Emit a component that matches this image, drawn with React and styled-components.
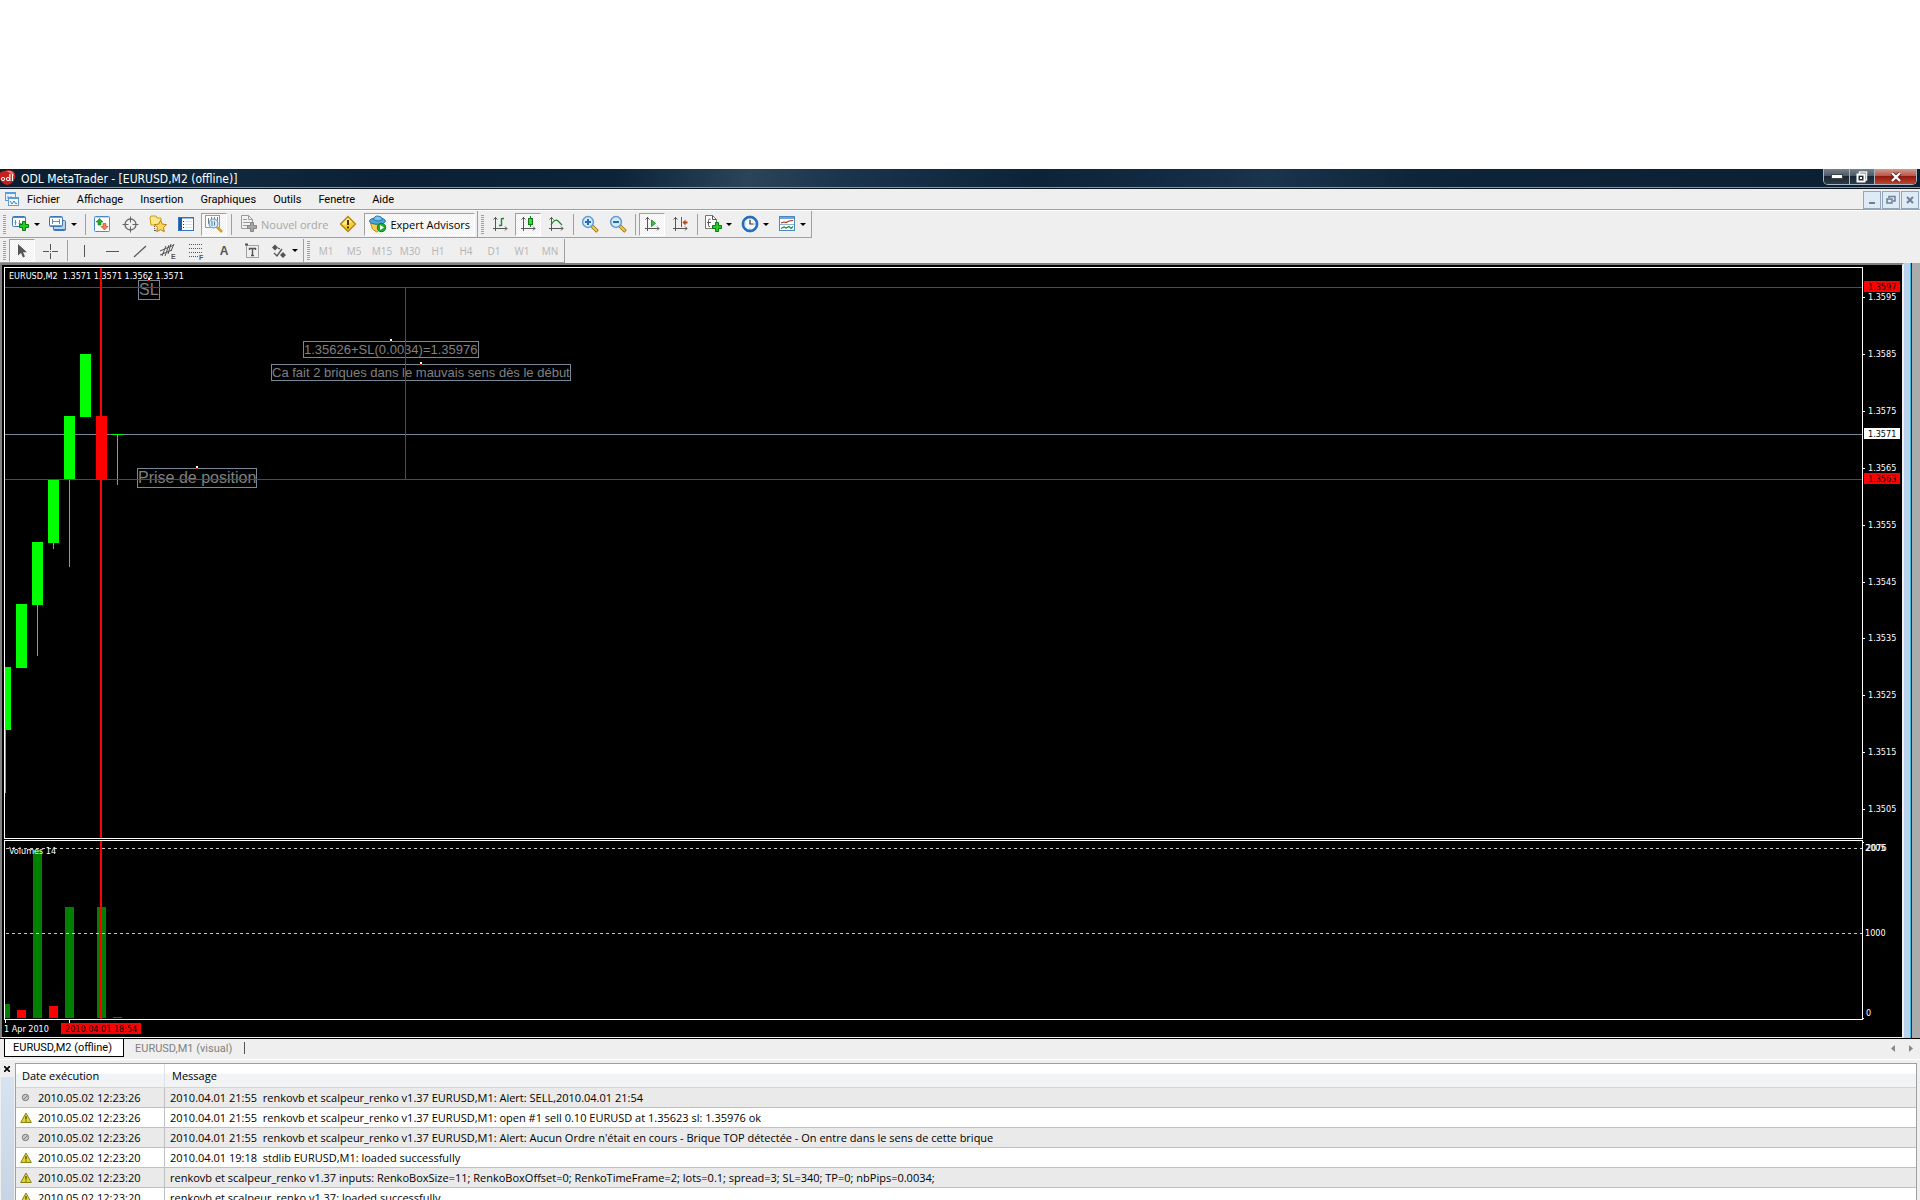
import React, { Fragment } from "react";
import styled, { createGlobalStyle, css } from "styled-components";

const periods = ["M1", "M5", "M15", "M30", "H1", "H4", "D1", "W1", "MN"];

const menus = [
  "Fichier",
  "Affichage",
  "Insertion",
  "Graphiques",
  "Outils",
  "Fenetre",
  "Aide",
];

// body: x, top, bottom. wick: lowest point under the body
const candles = [
  { x: -5, top: 399, bottom: 462, low: 525 },
  { x: 11, top: 336, bottom: 400 },
  { x: 27, top: 274, bottom: 337, low: 388 },
  { x: 43, top: 211, bottom: 275, low: 281 },
  { x: 59, top: 148, bottom: 211, low: 299 },
  { x: 75, top: 86, bottom: 149 },
  { x: 91, top: 148, bottom: 211, down: true },
  { x: 107, top: 166, bottom: 167, low: 217 },
];

const volumes = [
  { x: -4, height: 14 },
  { x: 12, height: 8, down: true },
  { x: 28, height: 168 },
  { x: 44, height: 12, down: true },
  { x: 60, height: 111 },
  { x: 92, height: 111 },
  { x: 108, height: 1, down: true },
];

const scale = [
  "1.3595",
  "1.3585",
  "1.3575",
  "1.3565",
  "1.3555",
  "1.3545",
  "1.3535",
  "1.3525",
  "1.3515",
  "1.3505",
];

const tags = [
  { price: "1.3597", y: 14, fill: "#f00" },
  { price: "1.3571", y: 161, fill: "#fff" },
  { price: "1.3563", y: 206, fill: "#f00" },
];

const notes = [
  { text: "SL", x: 133, y: 12, size: 16 },
  { text: "1.35626+SL(0.0034)=1.35976", x: 298, y: 73, size: 13 },
  {
    text: "Ca fait 2 briques dans le mauvais sens dès le début",
    x: 266,
    y: 96,
    size: 13,
  },
  { text: "Prise de position", x: 132, y: 200, size: 16 },
];

const logs = [
  {
    date: "2010.05.02 12:23:26",
    message:
      "2010.04.01 21:55  renkovb et scalpeur_renko v1.37 EURUSD,M1: Alert: SELL,2010.04.01 21:54",
  },
  {
    date: "2010.05.02 12:23:26",
    warning: true,
    message:
      "2010.04.01 21:55  renkovb et scalpeur_renko v1.37 EURUSD,M1: open #1 sell 0.10 EURUSD at 1.35623 sl: 1.35976 ok",
  },
  {
    date: "2010.05.02 12:23:26",
    message:
      "2010.04.01 21:55  renkovb et scalpeur_renko v1.37 EURUSD,M1: Alert: Aucun Ordre n'était en cours - Brique TOP détectée - On entre dans le sens de cette brique",
  },
  {
    date: "2010.05.02 12:23:20",
    warning: true,
    message: "2010.04.01 19:18  stdlib EURUSD,M1: loaded successfully",
  },
  {
    date: "2010.05.02 12:23:20",
    warning: true,
    message:
      "renkovb et scalpeur_renko v1.37 inputs: RenkoBoxSize=11; RenkoBoxOffset=0; RenkoTimeFrame=2; lots=0.1; spread=3; SL=340; TP=0; nbPips=0.0034;",
  },
  {
    date: "2010.05.02 12:23:20",
    warning: true,
    message: "renkovb et scalpeur_renko v1.37: loaded successfully",
  },
];

// icons
const Svg = ({ size = 18, children }) => (
  <svg
    width={size}
    height={size}
    viewBox={`0 0 ${size} ${size}`}
    fill="none"
    aria-hidden="true"
  >
    {children}
  </svg>
);

const Plus = ({ x, y, fill = "#1fd01f", stroke = "#0a7a12" }) => (
  <path
    transform={`translate(${x} ${y})`}
    d="M3.5 .5h3v3h3v3h-3v3h-3v-3h-3v-3h3z"
    fill={fill}
    stroke={stroke}
  />
);

const LogoIcon = () => (
  <Svg size={16}>
    <path
      d="M1 2Q7-1 13 1Q16 3 15 8Q13 14 7 15Q2 14 0 9V3z"
      fill="#c8201c"
    />
    <path d="M6 1Q14 0 14 6Q11 3 6 1z" fill="#ef7a6c" />
    <circle cx="3" cy="9" r="1.6" stroke="#fff" />
    <circle cx="8" cy="9" r="1.6" stroke="#fff" />
    <path d="M9.9 4v7M12.5 4v7" stroke="#fff" strokeWidth="1.2" />
  </Svg>
);

const MenuIcon = () => (
  <Svg size={16}>
    <rect x=".5" y=".5" width="10" height="8" fill="#e8f2fc" stroke="#5b9bd8" />
    <path d="M0 1.5h11" stroke="#5b9bd8" />
    <path d="M3 4v3M6 4v3M8 5v2" stroke="#5b9bd8" />
    <rect x="3.5" y="5.5" width="10" height="8" fill="#f5faff" stroke="#5b9bd8" />
    <path d="M3 6.5h11" stroke="#5b9bd8" />
    <path d="M5 9l2 3 2-3 2 3 1-1" stroke="#3b7cc0" />
  </Svg>
);

const NewChartIcon = () => (
  <Svg>
    <rect x=".5" y="1.5" width="13" height="10" rx="1" fill="#fff" stroke="#3a78b8" />
    <path d="M1 2.5h12" stroke="#4a88c8" />
    <path d="M3.5 5v5M2.5 7.5h2M7.5 5v5M6.5 8.5h3" stroke="#5b8fc2" />
    <Plus x={7} y={6} />
  </Svg>
);

const ProfilesIcon = () => (
  <Svg>
    <rect x="4.5" y="5.5" width="12" height="10" rx="1" fill="#bcd6f0" stroke="#3a78b8" />
    <path d="M5 14.5h12" stroke="#3a78b8" />
    <rect x=".5" y="1.5" width="13" height="10" rx="1" fill="#fff" stroke="#3a78b8" />
    <path d="M1 2.5h12M1 10.5h12" stroke="#6aa2d8" />
    <path d="M3.5 4v5M10.5 4v5M3.5 6.5h7" stroke="#5b8fc2" />
  </Svg>
);

const MarketIcon = () => (
  <Svg>
    <rect x="1.5" y="1.5" width="15" height="15" rx="1" fill="#fff" stroke="#4a8cc8" />
    <path d="M2 2.5h14" stroke="#b4d4f0" />
    <path d="M6.5 3.5L10 7H8v3H5V7H3z" fill="#23b02a" stroke="#137a1a" strokeWidth=".6" />
    <path d="M11.5 15L8 11.500h2v-3h3v3h2z" fill="#f58050" stroke="#b83d10" strokeWidth=".6" />
  </Svg>
);

const TargetIcon = () => (
  <Svg>
    <circle cx="9.5" cy="9.5" r="5.5" stroke="#666" strokeWidth="1.3" />
    <path d="M9.5 1.5v6M9.5 11.5v6M1.5 9.5h6M11.5 9.5h6" stroke="#666" />
  </Svg>
);

const FavoritesIcon = () => (
  <Svg>
    <path d="M1 3l1-2h5l1 2h4v7H2z" fill="#fbe88a" stroke="#c99a1a" />
    <path d="M5.500 11v5M6 15.500h3" stroke="#555" strokeDasharray="1 1" />
    <path
      d="M11.500 5.500l1.800 3.600 4.200.5-3 2.900.8 4.200-3.800-2-3.800 2 .8-4.200-3-2.900 4.200-.5z"
      fill="#ffd85a"
      stroke="#b8801a"
    />
  </Svg>
);

const NavigatorIcon = () => (
  <Svg>
    <rect x="1.5" y="2.5" width="15" height="13" fill="#fff" stroke="#2f74bc" />
    <path d="M2 3.5h14" stroke="#8fbce6" />
    <path d="M3.5 3v12" stroke="#2458a0" strokeWidth="3" />
    <path d="M6 6.5h1M6 9.5h1M6 12.5h1" stroke="#333" />
    <path d="M8 6.5h7M8 9.5h7M8 12.5h7" stroke="#d4e2f0" />
  </Svg>
);

const TesterIcon = () => (
  <Svg>
    <rect x=".5" y=".5" width="14" height="12" fill="#fff" stroke="#999" />
    <path d="M3.5 3v6M6.5 2v5M9.5 2v4M12.500 2v5" stroke="#777" />
    <circle cx="8.500" cy="8.500" r="4.500" fill="#cfe6f8" fillOpacity=".85" stroke="#6ba0d0" strokeWidth="1.200" />
    <path d="M7 6v5M9.500 6.500v4" stroke="#5c7c98" />
    <path d="M12 12l5 5" stroke="#d8a020" strokeWidth="2.600" />
  </Svg>
);

const OrderIcon = () => (
  <Svg>
    <path d="M1.5 .5h7l4 4v9h-11z" fill="#f2f2f2" stroke="#9a9a9a" />
    <path d="M8.500 .5v4h4M3 4.500h4M3 7.500h7M3 10.500h5" stroke="#9a9a9a" />
    <Plus x={7} y={7} fill="#a4a4a4" stroke="#858585" />
  </Svg>
);

const AlertIcon = () => (
  <Svg>
    <path d="M9 1.500l7.500 7.500L9 16.500 1.500 9z" fill="#f7cf2c" stroke="#b08414" strokeWidth="1.300" />
    <path d="M9 3l4 4-8 3-2-1z" fill="#fdea8c" />
    <path d="M9 5v5M9 11.500v2" stroke="#4a3405" strokeWidth="2" />
  </Svg>
);

const ExpertIcon = () => (
  <Svg>
    <path d="M1.500 8l8 2 4-2-1 6-5 3-4-3z" fill="#f5d04a" stroke="#b58a1a" />
    <ellipse cx="8.500" cy="6" rx="8" ry="3.200" fill="#4fa6d8" stroke="#2878a8" />
    <path d="M4.500 5Q5 .8 9 1t4.500 4Q9 7 4.500 5z" fill="#7cc6ec" stroke="#2878a8" />
    <circle cx="12.500" cy="12.500" r="4.200" fill="#1fae2c" stroke="#0d7a18" />
    <path d="M11 10v5l4-2.500z" fill="#fff" />
  </Svg>
);

const Axes = () => (
  <path
    d="M4.5 2v14M2 13.5h14M2.5 4.5l2-2 2 2M14 11.5l2 2-2 2"
    stroke="#555"
  />
);

const BarsIcon = () => (
  <Svg>
    <Axes />
    <path d="M10.5 3v8M8 10.500h2M11 3.500h2" stroke="#1a8a24" strokeWidth="1.400" />
  </Svg>
);

const CandlesIcon = () => (
  <Svg>
    <Axes />
    <path d="M11.5 1v11" stroke="#137a1a" />
    <rect x="9.5" y="3.500" width="4" height="6" fill="#2ede3a" stroke="#137a1a" />
  </Svg>
);

const LineIcon = () => (
  <Svg>
    <Axes />
    <path d="M4 10Q8 3 11 6t4 4" stroke="#1a8a24" strokeWidth="1.200" />
  </Svg>
);

const ZoomIcon = ({ plus }) => (
  <Svg>
    <path d="M11 11l5.500 5.500" stroke="#8f6b14" strokeWidth="3.600" />
    <path d="M11 11l5 5" stroke="#f2cc4a" strokeWidth="2" />
    <circle cx="7" cy="7" r="5.400" fill="#d4ebfb" stroke="#5a9cd4" strokeWidth="1.500" />
    <path
      d={plus ? "M4 7h6M7 4v6" : "M4 7h6"}
      stroke="#2a6cb0"
      strokeWidth="2"
    />
  </Svg>
);

const ScrollIcon = () => (
  <Svg>
    <Axes />
    <path d="M8.500 5v6.500l4-3.200z" fill="#2ecc3a" stroke="#137a1a" strokeWidth=".8" />
  </Svg>
);

const ShiftIcon = () => (
  <Svg>
    <Axes />
    <path d="M10.500 2v10" stroke="#3668a0" />
    <path d="M11.500 7.500l3-3v2h2v2h-2v2z" fill="#b8431a" />
  </Svg>
);

const IndicatorsIcon = () => (
  <Svg>
    <path d="M1.500 .5h7l4 4v9h-11z" fill="#fff" stroke="#777" />
    <path d="M8.500 .5v4h4M6 11.500q-1.500 .5-1.500-1V5.500q0-2 2-1.500M3 7.500h4" stroke="#555" />
    <Plus x={8} y={7} />
  </Svg>
);

const ClockIcon = () => (
  <Svg>
    <circle cx="9" cy="9" r="6.900" fill="#f4f8fc" stroke="#1e70cc" strokeWidth="2.200" />
    <circle cx="9" cy="9" r="8" stroke="#164e94" strokeWidth=".6" />
    <path d="M9 5v4h3.500" stroke="#333" strokeWidth="1.200" />
    <path d="M9 3.500v1M9 13.500v1M3.500 9h1M13.500 9h1" stroke="#777" />
  </Svg>
);

const TemplateIcon = () => (
  <Svg>
    <rect x="1.500" y="1.500" width="15" height="14" fill="#fff" stroke="#4a88c4" />
    <path d="M2 3h14" stroke="#6ea6dc" strokeWidth="2" />
    <path d="M2 9.500h14" stroke="#8ab4dc" />
    <path d="M3 8l3-1 2 .5 3-1.500 4-.5" stroke="#a83018" strokeWidth="1.200" />
    <path d="M3 13.500l3-1.500 2 1 3-1.500 2 2 2-2" stroke="#1a8a24" strokeWidth="1.200" />
  </Svg>
);

const CursorIcon = () => (
  <Svg>
    <path d="M5 2v11.500l3-2.500 2 4.500 2-1-2-4.300h4z" fill="#555" />
  </Svg>
);

const CrossIcon = () => (
  <Svg>
    <path d="M9.5 2v6M9.5 11v6M2 9.500h6M11 9.500h6M9 9.500h1" stroke="#555" />
  </Svg>
);

const VLineIcon = () => (
  <Svg>
    <path d="M9.5 3v12" stroke="#555" />
  </Svg>
);

const HLineIcon = () => (
  <Svg>
    <path d="M3 9.5h13" stroke="#555" />
  </Svg>
);

const TrendIcon = () => (
  <Svg>
    <path d="M3 15L15 4" stroke="#555" strokeWidth="1.200" />
  </Svg>
);

const Small = styled.text`
  font: bold 7px "Liberation Sans", Arial, sans-serif;
`;

const ChannelIcon = () => (
  <Svg>
    <path
      d="M1 9L15 3M1 13l12-5M3 14L7 4M6 14l4-11M9 12l3-10M12 9l3-7"
      stroke="#555"
    />
    <Small x="12" y="17" fill="#555">
      E
    </Small>
  </Svg>
);

const FiboIcon = () => (
  <Svg>
    <path
      d="M2 2.500h14M2 6.500h14M2 10.500h14M2 14.500h9"
      stroke="#555"
      strokeDasharray="1 1"
    />
    <Small x="12" y="18" fill="#555">
      F
    </Small>
  </Svg>
);

const LabelIcon = () => (
  <Svg>
    <rect x="3.500" y="3.500" width="12" height="12" stroke="#555" strokeDasharray="1 1" />
    <path d="M2 2.500h3" stroke="#555" strokeWidth="2" />
    <path d="M6 6.500h7M9.500 6v8M8 13.500h3M6.500 6v2M12.500 6v2" stroke="#555" strokeWidth="1.400" />
  </Svg>
);

const ArrowsIcon = () => (
  <Svg>
    <path d="M5 2.500l3 3-3 3-3-3zM13 10l3 3-3 3-3-3z" fill="#555" />
    <path d="M4 11l3 3 5-7M8 6l2 1" stroke="#555" strokeWidth="1.300" />
  </Svg>
);

const WarningIcon = () => (
  <Svg size={12}>
    <path d="M6 1L11.300 10.500H.7z" fill="#e2d62c" stroke="#85801a" />
    <path d="M6 4v3.500M6 8.500v1" stroke="#4c4708" strokeWidth="1.300" />
  </Svg>
);

const InfoIcon = () => (
  <Svg size={12}>
    <circle cx="5.500" cy="5.500" r="3.200" fill="#c9c9c9" stroke="#7c7c7c" />
    <path d="M3.500 7.500l4-4" stroke="#7c7c7c" />
  </Svg>
);

export function App() {
  return (
    <Fragment>
      <GlobalStyle />
      <Page>
        <Desktop />
        <TitleBar>
          <LogoIcon />
          <Title>ODL MetaTrader - [EURUSD,M2 (offline)]</Title>
          <WindowButtons>
            <WindowButton aria-label="Réduire" $width="25px">
              <svg width="12" height="5" aria-hidden="true">
                <rect x=".5" y=".5" width="11" height="4" fill="#fff" stroke="#444" />
              </svg>
            </WindowButton>
            <WindowButton aria-label="Restaurer" $width="25px">
              <svg width="12" height="12" fill="none" aria-hidden="true">
                <path d="M3.500 3V1h7v8H9" stroke="#eee" strokeWidth="1.500" />
                <rect x="1.500" y="3.500" width="7" height="7" stroke="#fff" strokeWidth="2" />
                <path d="M4 7h2" stroke="#fff" strokeWidth="2" />
              </svg>
            </WindowButton>
            <WindowButton aria-label="Fermer" $width="42px" $close>
              <svg width="12" height="10" aria-hidden="true">
                <path d="M2 1l8 8M10 1L2 9" stroke="#5a1c14" strokeWidth="4" />
                <path d="M2 1l8 8M10 1L2 9" stroke="#fff" strokeWidth="2.400" />
              </svg>
            </WindowButton>
          </WindowButtons>
        </TitleBar>
        <MenuBar>
          <MenuIcon />
          <Menus>
            {menus.map((menu) => (
              <MenuItem key={menu}>{menu}</MenuItem>
            ))}
          </Menus>
          <ChildButton aria-label="Réduire la fenêtre">
            <svg width="8" height="10" aria-hidden="true">
              <path d="M1 8h6" stroke="#6d8096" strokeWidth="2" />
            </svg>
          </ChildButton>
          <ChildButton aria-label="Restaurer la fenêtre">
            <svg width="10" height="10" fill="none" aria-hidden="true">
              <path d="M3 3V1.500h6V6H7" stroke="#6d8096" strokeWidth="1.500" />
              <rect x="1" y="4" width="5" height="4" stroke="#6d8096" strokeWidth="1.500" />
            </svg>
          </ChildButton>
          <ChildButton aria-label="Fermer la fenêtre">
            <svg width="8" height="8" aria-hidden="true">
              <path d="M1 1l6 6M7 1L1 7" stroke="#6d8096" strokeWidth="2" />
            </svg>
          </ChildButton>
        </MenuBar>

        <ToolRow>
          <ToolGroup>
            <Grip />
            <DropTool aria-label="Nouveau graphique">
              <NewChartIcon />
              <Caret />
            </DropTool>
            <DropTool aria-label="Profils">
              <ProfilesIcon />
              <Caret />
            </DropTool>
            <Separator />
            <Tool aria-label="Market Watch">
              <MarketIcon />
            </Tool>
            <Tool aria-label="Data Window">
              <TargetIcon />
            </Tool>
            <Tool aria-label="Navigator">
              <FavoritesIcon />
            </Tool>
            <Tool aria-label="Terminal">
              <NavigatorIcon />
            </Tool>
            <Tool aria-label="Strategy Tester" $pressed>
              <TesterIcon />
            </Tool>
            <Separator />
            <TextTool disabled>
              <OrderIcon />
              Nouvel ordre
            </TextTool>
            <Tool aria-label="MetaEditor">
              <AlertIcon />
            </Tool>
            <TextTool $pressed>
              <ExpertIcon />
              Expert Advisors
            </TextTool>
          </ToolGroup>
          <ToolGroup>
            <Grip />
            <Tool aria-label="Bar chart">
              <BarsIcon />
            </Tool>
            <Tool aria-label="Candlesticks" $pressed>
              <CandlesIcon />
            </Tool>
            <Tool aria-label="Line chart">
              <LineIcon />
            </Tool>
            <Separator />
            <Tool aria-label="Zoom avant">
              <ZoomIcon plus />
            </Tool>
            <Tool aria-label="Zoom arrière">
              <ZoomIcon />
            </Tool>
            <Separator />
            <Tool aria-label="Auto scroll" $pressed>
              <ScrollIcon />
            </Tool>
            <Tool aria-label="Chart shift">
              <ShiftIcon />
            </Tool>
            <Separator />
            <DropTool aria-label="Indicateurs">
              <IndicatorsIcon />
              <Caret />
            </DropTool>
            <DropTool aria-label="Périodes">
              <ClockIcon />
              <Caret />
            </DropTool>
            <DropTool aria-label="Modèles">
              <TemplateIcon />
              <Caret />
            </DropTool>
          </ToolGroup>
        </ToolRow>
        <ToolRow $last>
          <ToolGroup>
            <Grip />
            <Tool aria-label="Curseur" $pressed>
              <CursorIcon />
            </Tool>
            <Tool aria-label="Réticule">
              <CrossIcon />
            </Tool>
            <Separator />
            <Tool aria-label="Ligne verticale">
              <VLineIcon />
            </Tool>
            <Tool aria-label="Ligne horizontale">
              <HLineIcon />
            </Tool>
            <Tool aria-label="Ligne de tendance">
              <TrendIcon />
            </Tool>
            <Tool aria-label="Canal équidistant">
              <ChannelIcon />
            </Tool>
            <Tool aria-label="Fibonacci">
              <FiboIcon />
            </Tool>
            <Tool $letter>A</Tool>
            <Tool aria-label="Étiquette">
              <LabelIcon />
            </Tool>
            <DropTool aria-label="Flèches">
              <ArrowsIcon />
              <Caret />
            </DropTool>
          </ToolGroup>
          <ToolGroup>
            <Grip />
            {periods.map((period) => (
              <Tool key={period} disabled>
                {period}
              </Tool>
            ))}
          </ToolGroup>
        </ToolRow>

        <Workspace>
          <ChartWindow>
            <Plot $row={1}>
              <Drawing>
                <line x1="0" x2="100%" y1="166.5" y2="166.5" stroke="#778899" />
                {candles.map(({ x, top, bottom, low, down }) => (
                  <g key={x} fill={down ? "#f00" : "#0f0"}>
                    <rect x={x} y={top} width="11" height={bottom - top} />
                    {low && (
                      <rect x={x + 5} y={bottom} width="1" height={low - bottom} />
                    )}
                  </g>
                ))}
              </Drawing>
              <Quote>{"EURUSD,M2  1.3571 1.3571 1.3562 1.3571"}</Quote>
              {notes.map(({ text, x, y, size }) => (
                <Note key={text} $x={x} $y={y} $size={size}>
                  {text}
                </Note>
              ))}
              <Overlay>
                <rect x="95" y="0" width="2" height="100%" fill="#f00" />
                <line x1="0" x2="100%" y1="19.5" y2="19.5" stroke="#f00" />
                <line x1="0" x2="100%" y1="211.5" y2="211.5" stroke="#f00" />
                <line x1="400.5" x2="400.5" y1="19" y2="211" stroke="#f00" />
              </Overlay>
            </Plot>
            <Scale $row={1}>
              {scale.map((price, i) => {
                const y = Math.round(30 + i * 56.9);
                return (
                  <g key={price}>
                    <rect x="0" y={y} width="2" height="1" fill="#fff" />
                    <AxisText x="5" y={y + 3}>
                      {price}
                    </AxisText>
                  </g>
                );
              })}
              {tags.map(({ price, y, fill }) => (
                <g key={price}>
                  <rect x="1" y={y} width="36" height="11" fill={fill} />
                  <AxisText x="5" y={y + 9} $dark>
                    {price}
                  </AxisText>
                </g>
              ))}
            </Scale>
            <Plot $row={3}>
              <Drawing>
                {volumes.map(({ x, height, down }) => (
                  <rect
                    key={x}
                    x={x}
                    y={177 - height}
                    width="9"
                    height={height}
                    fill={down ? "#f00" : "#008000"}
                  />
                ))}
                <Level y1="7.5" y2="7.5" x1="1" x2="100%" />
                <Level y1="92.5" y2="92.5" x1="1" x2="100%" />
                <AxisText x="4" y="13">
                  Volumes 14
                </AxisText>
                <rect x="95" y="0" width="2" height="100%" fill="#f00" />
              </Drawing>
            </Plot>
            <Scale $row={3}>
              <rect x="0" y="2" width="1" height="1" fill="#fff" />
              <AxisText x="2" y="11">
                2005
              </AxisText>
              <AxisText x="3" y="11">
                2076
              </AxisText>
              <AxisText x="2" y="96">
                1000
              </AxisText>
              <AxisText x="3" y="176">
                0
              </AxisText>
              <rect x="0" y="178" width="1" height="1" fill="#fff" />
            </Scale>
            <Dates>
              <rect x="1" y="0" width="1" height="3" fill="#fff" />
              <rect x="65" y="0" width="1" height="3" fill="#fff" />
              <AxisText x="0" y="12">
                1 Apr 2010
              </AxisText>
              <rect x="57" y="3" width="80" height="11" fill="#f00" />
              <AxisText x="61" y="12" $dark>
                2010.04.01 18:54
              </AxisText>
            </Dates>
          </ChartWindow>
          <ChartEdge />
        </Workspace>

        <Tabs>
          <Tab $active>EURUSD,M2 (offline)</Tab>
          <Tab>EURUSD,M1 (visual)</Tab>
          <TabEnd />
          <Scroll aria-label="Onglets précédents">
            <svg width="5" height="7" aria-hidden="true">
              <path d="M4 0v7L0 3.500z" fill="#888" />
            </svg>
          </Scroll>
          <Scroll aria-label="Onglets suivants">
            <svg width="5" height="7" aria-hidden="true">
              <path d="M1 0v7l4-3.500z" fill="#888" />
            </svg>
          </Scroll>
        </Tabs>

        <Terminal>
          <Dock>
            <DockClose aria-label="Fermer le terminal">
              <svg width="6" height="6" aria-hidden="true">
                <path d="M0 0l6 6M6 0L0 6" stroke="#000" strokeWidth="1.600" />
              </svg>
            </DockClose>
            <DockBar />
          </Dock>
          <LogFrame>
            <LogTable>
              <thead>
                <tr>
                  <HeadCell $date>Date exécution</HeadCell>
                  <HeadCell>Message</HeadCell>
                </tr>
              </thead>
              <tbody>
                {logs.map(({ date, message, warning }) => (
                  <LogRow key={message}>
                    <LogCell>
                      <Stamp>
                        {warning ? <WarningIcon /> : <InfoIcon />}
                        {date}
                      </Stamp>
                    </LogCell>
                    <LogCell>{message}</LogCell>
                  </LogRow>
                ))}
              </tbody>
            </LogTable>
          </LogFrame>
        </Terminal>
      </Page>
    </Fragment>
  );
}

const GlobalStyle = createGlobalStyle`
  * {
    box-sizing: border-box;
  }

  body {
    margin: 0;
    background: #fff;
    font-family: "Open Sans", "Noto Sans", sans-serif;
    font-size: 11px;
    color: #000;
  }

  button {
    margin: 0;
    padding: 0;
    border: none;
    background: none;
    color: inherit;
    font: inherit;
  }

  svg {
    display: block;
    flex: none;
  }
`;

const Page = styled.div`
  display: flex;
  flex-direction: column;
  height: 100vh;
  overflow: hidden;
  background: #efefef;
`;

const Desktop = styled.div`
  flex: none;
  height: 169px;
  background: #fff;
`;

const TitleBar = styled.header`
  display: flex;
  flex: none;
  align-items: flex-start;
  height: 20px;
  padding-top: 1px;
  border-bottom: 1px solid #0a1420;
  box-shadow: inset 0 -1px #8d97a0;
  background: linear-gradient(
    100deg,
    #0b1d2e 0%,
    #10283d 12%,
    #0b2034 20%,
    #0c2338 32%,
    #2b4459 39%,
    #1a344c 44%,
    #0c2338 54%,
    #142c44 62%,
    #1a344c 66%,
    #0e2438 74%,
    #0b1f32 100%
  );
`;

const Title = styled.h1`
  flex: 1;
  margin: 0;
  padding-left: 5px;
  color: #fff;
  font: 12px/19px "DejaVu Sans Condensed", "DejaVu Sans", sans-serif;
`;

const WindowButtons = styled.div`
  display: flex;
  height: 16px;
  margin: -1px 3px 0 0;
  border: 1px solid #a9b6c2;
  border-top: none;
  border-radius: 0 0 5px 5px;
  overflow: hidden;
`;

const WindowButton = styled.button`
  display: flex;
  align-items: center;
  justify-content: center;
  width: ${(props) => props.$width};
  background: linear-gradient(#75818c 0%, #4d5a67 45%, #1a2632 50%, #2c3b4a 100%);

  & + & {
    border-left: 1px solid #a9b6c2;
  }

  ${(props) =>
    props.$close &&
    css`
      background: linear-gradient(#d49a8e 0%, #b9574a 45%, #8e1b0e 50%, #c0442e 100%);
    `}
`;

const MenuBar = styled.nav`
  display: flex;
  flex: none;
  align-items: center;
  gap: 1px;
  height: 22px;
  padding: 0 1px 0 5px;
  border-bottom: 1px solid #fff;
  box-shadow: inset 0 -1px #a0a0a0;
`;

const Menus = styled.div`
  display: flex;
  flex: 1;
  gap: 17px;
  padding-left: 5px;
`;

const MenuItem = styled.button`
  font: 11px/20px Roboto, sans-serif;
`;

const ChildButton = styled.button`
  display: flex;
  align-items: center;
  justify-content: center;
  width: 18px;
  height: 18px;
  border: 1px solid #93a5ba;
  background: #dfeaf7;
`;

const ToolRow = styled.div`
  display: flex;
  flex: none;
  height: 27px;

  ${(props) =>
    props.$last &&
    css`
      height: 25px;
      padding-top: 1px;
    `}
`;

const ToolGroup = styled.div`
  display: flex;
  align-items: center;
  border-right: 1px solid #a0a0a0;
  border-bottom: 1px solid #a0a0a0;

  ${ToolRow}:last-of-type & {
    border-bottom: none;
  }
`;

const Grip = styled.span`
  width: 8px;
  height: 19px;
  background: repeating-linear-gradient(#a0a0a0 0 1px, transparent 1px 2px)
    3px 0 / 3px 100% no-repeat;
`;

const Separator = styled.span`
  width: 6px;
  height: 21px;
  background: linear-gradient(#a0a0a0, #a0a0a0) 3px 0 / 1px 100% no-repeat;
`;

const pressed = css`
  border: 1px solid;
  border-color: #a0a0a0 #fff #fff #a0a0a0;
  background: repeating-conic-gradient(#fff 0 25%, #efefef 0 50%) 0 0 / 2px 2px;
`;

const Tool = styled.button`
  display: flex;
  align-items: center;
  justify-content: center;
  width: 26px;
  height: 23px;
  margin: 0 1px;
  font-size: 10px;

  &:disabled {
    color: #b4b4b4;
  }

  ${(props) => props.$pressed && pressed}
  ${(props) =>
    props.$letter &&
    css`
      color: #555;
      font: bold 12px "Liberation Sans", Arial, sans-serif;
    `}
`;

const DropTool = styled.button`
  display: flex;
  align-items: center;
  gap: 4px;
  width: 37px;
  height: 23px;
  padding-left: 4px;
`;

const TextTool = styled.button`
  display: flex;
  align-items: center;
  gap: 3px;
  height: 23px;
  margin: 0 2px;
  padding: 0 4px;

  &:disabled {
    color: #a6a6a6;
  }

  ${(props) => props.$pressed && pressed}
`;

const Caret = styled.span`
  border: 3px solid transparent;
  border-top-color: #000;
  border-bottom: none;
`;

const Workspace = styled.main`
  display: flex;
  flex: none;
  border-bottom: 1px solid #000;
  background: #ababab;
`;

const ChartWindow = styled.section`
  display: grid;
  flex: 1;
  grid-template-columns: 1fr 39px;
  grid-template-rows: 572px 1px 180px 17px;
  min-width: 0;
  padding: 2px 0 0 2px;
  border: 2px solid #808080;
  border-right-color: #f0f0f0;
  border-bottom: 1px solid #f0f0f0;
  background: #000;
`;

const Plot = styled.div`
  position: relative;
  grid-column: 1;
  grid-row: ${(props) => props.$row};
  border: 1px solid #fff;
  overflow: hidden;
`;

const Scale = styled.svg`
  grid-column: 2;
  grid-row: ${(props) => props.$row};
  width: 100%;
  height: 100%;
`;

const Drawing = styled.svg`
  width: 100%;
  height: 100%;
`;

const Overlay = styled(Drawing)`
  position: absolute;
  inset: 0;
`;

const Dates = styled.svg`
  grid-column: 1 / 3;
  grid-row: 4;
  width: 100%;
  height: 100%;
`;

const chartFont = css`
  font: 9px "DejaVu Sans Condensed", "DejaVu Sans", sans-serif;
`;

const AxisText = styled.text`
  fill: ${(props) => (props.$dark ? "#000" : "#fff")};
  ${chartFont}
`;

const Level = styled.line`
  stroke: #c8c8c8;
  stroke-dasharray: 3 3;
`;

const Quote = styled.div`
  position: absolute;
  top: 3px;
  left: 4px;
  color: #fff;
  white-space: pre;
  ${chartFont}
`;

const Note = styled.div`
  position: absolute;
  top: ${(props) => props.$y}px;
  left: ${(props) => props.$x}px;
  border: 1px solid #778899;
  color: #808080;
  font-family: "Liberation Sans", Arial, sans-serif;
  font-size: ${(props) => props.$size}px;
  line-height: ${(props) => props.$size + 2}px;
  white-space: nowrap;

  &::before {
    content: "";
    position: absolute;
    top: -3px;
    left: calc(50% - 1px);
    width: 2px;
    height: 2px;
    border-bottom: 1px solid #f00;
    background: #fff;
  }
`;

const ChartEdge = styled.div`
  width: 16px;
  border-left: 6px solid #b9d1ea;
  box-shadow: inset 1px 0 #3cc0e6, inset 2px 0 #1a2a36;
`;

const Tabs = styled.div`
  display: flex;
  flex: none;
  height: 21px;
  padding: 0 1px 2px 4px;
  border-bottom: 1px solid #fff;
`;

const Tab = styled.button`
  padding: 0 12px 0 11px;
  color: #808080;
  font: 11px Roboto, sans-serif;

  ${(props) =>
    props.$active &&
    css`
      padding: 0 11px 0 8px;
      border: solid #000;
      border-width: 0 1px 1px;
      background: #fff;
      color: #000;
    `}
`;

const TabEnd = styled.span`
  flex: 1;
  margin: 3px 0;
  border-left: 1px solid #555;
`;

const Scroll = styled.button`
  display: flex;
  align-items: center;
  justify-content: center;
  width: 17px;
`;

const Terminal = styled.section`
  display: flex;
  flex: 1;
  min-height: 0;
  padding-top: 3px;
`;

const Dock = styled.div`
  display: flex;
  flex-direction: column;
  width: 15px;
`;

const DockClose = styled.button`
  display: flex;
  height: 14px;
  padding: 3px 0 0 4px;
`;

const DockBar = styled.div`
  flex: 1;
  margin: 0 1px;
  background: linear-gradient(#d6e4f2, #c6d4e3);
`;

const LogFrame = styled.div`
  flex: 1;
  min-width: 0;
  margin-right: 3px;
  border: 1px solid #a0a0a0;
  border-width: 1px 1px 0;
  overflow: hidden;
`;

const LogTable = styled.table`
  width: 100%;
  border-collapse: separate;
  border-spacing: 0;
  table-layout: fixed;
  background: #fff;
`;

const HeadCell = styled.th`
  height: 24px;
  padding: 0 7px;
  border-bottom: 1px solid #d5d5d5;
  background: linear-gradient(#fff 40%, #f1f3f5 45%);
  font-weight: normal;
  text-align: left;

  ${(props) =>
    props.$date &&
    css`
      width: 149px;
      padding: 0 6px;
      border-right: 1px solid #dfe2e5;
    `}
`;

const LogRow = styled.tr`
  &:nth-child(odd) {
    background: #eaeaea;
  }
`;

const LogCell = styled.td`
  height: 20px;
  padding: 0 5px;
  border-bottom: 1px solid #c0c0c0;
  line-height: 18px;
  white-space: pre;

  &:first-child {
    padding-left: 4px;
    border-right: 1px solid #c0c0c0;
  }
`;

const Stamp = styled.span`
  display: flex;
  align-items: center;
  gap: 6px;
`;

export default App;
